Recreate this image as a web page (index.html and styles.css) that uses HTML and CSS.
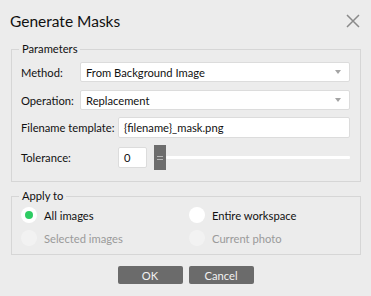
FILE: index.html
```html
<!DOCTYPE html>
<html>
<head>
<meta charset="utf-8">
<link rel="stylesheet" href="styles.css">
</head>
<body>
<div class="dialog">
  <div class="header">
    <div class="title">Generate Masks</div>
    <svg class="close" width="14" height="14" viewBox="0 0 14 14"><path d="M1 1L13 13M13 1L1 13" stroke="#8a8a8a" stroke-width="1.5" fill="none"/></svg>
  </div>
  <fieldset class="group params">
    <legend>Parameters</legend>
    <div class="row r1">
      <label class="lbl w1">Method:</label>
      <div class="select"><span>From Background Image</span><i class="arrow"></i></div>
    </div>
    <div class="row r2">
      <label class="lbl w1">Operation:</label>
      <div class="select"><span>Replacement</span><i class="arrow"></i></div>
    </div>
    <div class="row r3">
      <label class="lbl w2">Filename template:</label>
      <div class="input grow">{filename}_mask.png</div>
    </div>
    <div class="row r4">
      <label class="lbl w2">Tolerance:</label>
      <div class="input num">0</div>
      <div class="slider">
        <div class="handle"><i></i><i></i></div>
        <div class="track"></div>
      </div>
    </div>
  </fieldset>
  <fieldset class="group apply">
    <legend>Apply to</legend>
    <div class="radios">
      <div class="radio"><span class="dot on"></span><span>All images</span></div>
      <div class="radio"><span class="dot"></span><span>Entire workspace</span></div>
      <div class="radio dis"><span class="dot"></span><span>Selected images</span></div>
      <div class="radio dis"><span class="dot"></span><span>Current photo</span></div>
    </div>
  </fieldset>
  <div class="buttons">
    <div class="btn">OK</div>
    <div class="btn">Cancel</div>
  </div>
</div>
</body>
</html>
```

FILE: styles.css
```css
html, body {
  margin: 0;
  padding: 0;
  background: #ececec;
}
body {
  font-family: Lato, "Noto Sans", sans-serif;
  font-size: 11.2px;
  color: #111;
  width: 371px;
  height: 296px;
  overflow: hidden;
  white-space: nowrap;
}
.dialog {
  display: flex;
  flex-direction: column;
}
.header {
  height: 41px;
  display: flex;
  align-items: center;
  justify-content: space-between;
  padding: 0 11px 0 10px;
  box-sizing: border-box;
}
.title {
  font-size: 15.5px;
  color: #111;
  margin-top: 1px;
}
.group {
  margin: 0 10px 0 11px;
  border: 1px solid #d6d6d6;
  padding: 5px 10px 11px 9px;
  min-width: 0;
}
.group legend {
  padding: 0 3px;
  margin-left: -2px;
  line-height: 16px;
  height: 16px;
}
.row {
  display: flex;
  align-items: center;
}
.lbl {
  flex: none;
}
.w1 { width: 59px; }
.w2 { width: 97px; }
.r1 { height: 20px; }
.r2 { height: 20px; margin-top: 8px; }
.r3 { height: 21px; margin-top: 7px; }
.r4 { height: 25px; margin-top: 7px; }
.select, .input {
  background: #fff;
  border: 1px solid #dcdcdc;
  border-radius: 2px;
  box-sizing: border-box;
  display: flex;
  align-items: center;
  padding: 0 5px;
}
.select {
  flex: 1;
  height: 20px;
  justify-content: space-between;
}
.arrow {
  width: 0;
  height: 0;
  border-left: 3.5px solid transparent;
  border-right: 3.5px solid transparent;
  border-top: 4px solid #a4a4a4;
  margin-right: 3px;
}
.input.grow {
  flex: 1;
  height: 21px;
}
.input.num {
  width: 29px;
  height: 21px;
  flex: none;
}
.slider {
  flex: 1;
  display: flex;
  align-items: center;
  margin-left: 7px;
  height: 25px;
}
.handle {
  width: 12px;
  height: 25px;
  background: #6d6d6d;
  display: flex;
  flex-direction: column;
  align-items: center;
  justify-content: center;
  gap: 2px;
  flex: none;
}
.handle i {
  display: block;
  width: 6px;
  height: 1px;
  background: #b8b8b8;
}
.track {
  flex: 1;
  height: 3px;
  background: #fff;
  border-radius: 1px;
}
.apply {
  margin-top: 6px;
  padding: 1px 10px 6px 9px;
}
.radios {
  display: grid;
  grid-template-columns: 168px 1fr;
  row-gap: 3px;
}
.radio {
  display: flex;
  align-items: center;
  gap: 7px;
  height: 20px;
}
.dot {
  width: 16px;
  height: 16px;
  border-radius: 50%;
  background: #fff;
  display: flex;
  align-items: center;
  justify-content: center;
  flex: none;
}
.dot.on::after {
  content: "";
  width: 8px;
  height: 8px;
  border-radius: 50%;
  background: #2ecc63;
}
.radio.dis { color: #9a9a9a; }
.radio.dis .dot { background: #f2f2f2; }
.buttons {
  display: flex;
  justify-content: center;
  gap: 6px;
  margin-top: 11px;
}
.btn {
  width: 65px;
  height: 18px;
  background: #6b6b6b;
  color: #f2f2f2;
  border-radius: 2px;
  display: flex;
  align-items: center;
  justify-content: center;
}
```
